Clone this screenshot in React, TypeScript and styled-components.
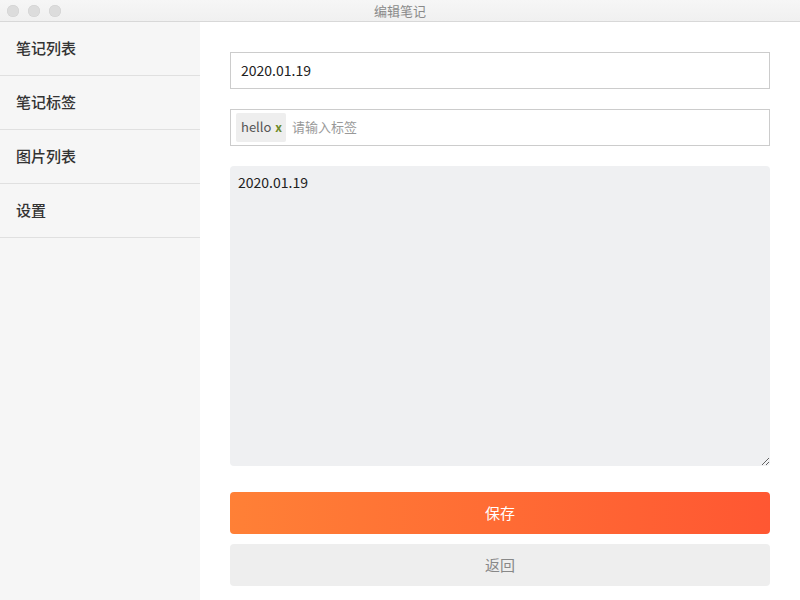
import React from "react";
import styled, { createGlobalStyle } from "styled-components";

const GlobalStyle = createGlobalStyle`
  html, body {
    margin: 0;
    padding: 0;
    height: 100%;
  }
  body {
    font-family: "Noto Sans CJK SC", "Noto Sans", sans-serif;
    color: #333;
    background: #fff;
  }
  #root {
    height: 100%;
  }
`;

const Window = styled.div`
  width: 800px;
  height: 600px;
  display: flex;
  flex-flow: column;
  overflow: hidden;
`;

const TitleBar = styled.div`
  height: 21px;
  flex: none;
  display: flex;
  align-items: center;
  position: relative;
  background: linear-gradient(#f6f6f6, #f0f0f0);
  border-bottom: 1px solid #d8d8d8;
`;

const Lights = styled.div`
  display: flex;
  gap: 9px;
  padding-left: 7px;
`;

const Light = styled.span`
  width: 12px;
  height: 12px;
  border-radius: 50%;
  background: #dcdcdc;
  box-shadow: inset 0 0 0 0.5px #d0d0d0;
`;

const Title = styled.div`
  position: absolute;
  left: 0;
  right: 0;
  text-align: center;
  font-size: 13px;
  color: #8a8a8a;
  pointer-events: none;
`;

const Body = styled.div`
  flex: 1;
  display: flex;
`;

const Sidebar = styled.nav`
  width: 200px;
  flex: none;
  background: #f6f6f6;
  display: flex;
  flex-flow: column;
`;

const NavItem = styled.a`
  box-sizing: border-box;
  height: 54px;
  display: flex;
  align-items: center;
  padding: 0 0 3px 16px;
  font-size: 15px;
  font-weight: 500;
  color: #333;
  border-bottom: 1px solid #e0e0e0;
  cursor: pointer;
`;

const Main = styled.main`
  flex: 1;
  display: flex;
  flex-flow: column;
  padding: 30px 30px 0 30px;
`;

const TextInput = styled.input`
  box-sizing: border-box;
  width: 100%;
  height: 37px;
  border: 1px solid #cccccc;
  padding: 0 10px 2px;
  font-family: inherit;
  font-size: 14px;
  color: #222;
  outline: none;
  margin-bottom: 20px;
`;

const TagBox = styled.div`
  box-sizing: border-box;
  height: 37px;
  border: 1px solid #cccccc;
  display: flex;
  align-items: center;
  padding: 0 5px;
  gap: 6px;
  margin-bottom: 20px;
`;

const Tag = styled.span`
  box-sizing: border-box;
  display: flex;
  align-items: center;
  gap: 4px;
  height: 29px;
  padding: 0 4px 2px 5px;
  background: #eeeeee;
  border-radius: 2px;
  font-size: 13px;
  color: #555;
`;

const TagRemove = styled.span`
  color: #6d8a2a;
  font-weight: 700;
  font-size: 12px;
  cursor: pointer;
`;

const TagInput = styled.input`
  flex: 1;
  border: none;
  outline: none;
  background: transparent;
  padding: 0 0 2px;
  font-family: inherit;
  font-size: 13px;
  color: #333;
  &::placeholder {
    color: #999;
  }
`;

const Content = styled.textarea`
  box-sizing: border-box;
  width: 100%;
  height: 300px;
  border: none;
  border-radius: 4px;
  background: #eff0f2;
  padding: 6px 8px;
  font-family: inherit;
  font-size: 14px;
  line-height: 20px;
  color: #222;
  outline: none;
  margin: 0 0 26px 0;
  display: block;
`;

const Button = styled.button<{ $primary?: boolean }>`
  width: 100%;
  height: 42px;
  border: none;
  border-radius: 4px;
  padding: 0 0 2px;
  font-family: inherit;
  font-size: 15px;
  cursor: pointer;
  margin-bottom: 10px;
  color: ${(p) => (p.$primary ? "#fff" : "#888")};
  background: ${(p) =>
    p.$primary ? "linear-gradient(90deg, #ff8036, #ff5732)" : "#eeeeee"};
`;

const menu = ["笔记列表", "笔记标签", "图片列表", "设置"];

export default function App() {
  return (
    <Window>
      <GlobalStyle />
      <TitleBar>
        <Lights>
          <Light />
          <Light />
          <Light />
        </Lights>
        <Title>编辑笔记</Title>
      </TitleBar>
      <Body>
        <Sidebar>
          {menu.map((m) => (
            <NavItem key={m}>{m}</NavItem>
          ))}
        </Sidebar>
        <Main>
          <TextInput defaultValue="2020.01.19" />
          <TagBox>
            <Tag>
              hello <TagRemove>x</TagRemove>
            </Tag>
            <TagInput placeholder="请输入标签" />
          </TagBox>
          <Content defaultValue="2020.01.19" />
          <Button $primary>保存</Button>
          <Button>返回</Button>
        </Main>
      </Body>
    </Window>
  );
}
